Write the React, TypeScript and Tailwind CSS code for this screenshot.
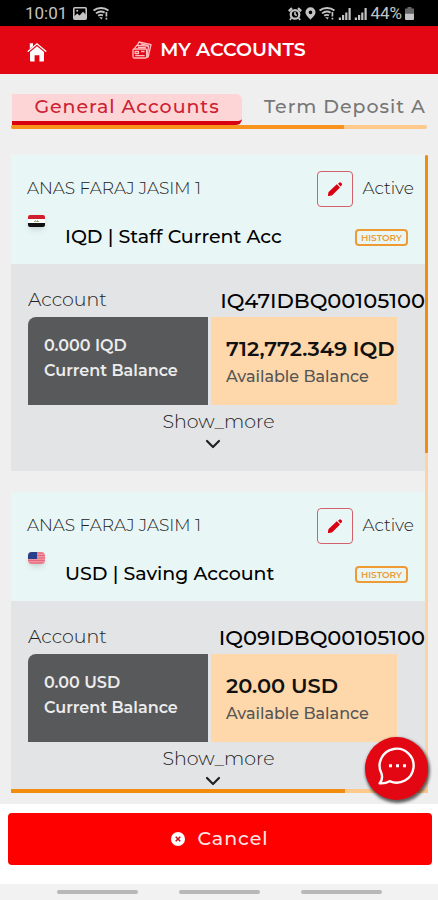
import { ChevronDown } from "lucide-react";
import { clsx } from "clsx";

type Currency = "IQD" | "USD";

type Account = {
  owner: string;
  currency: Currency;
  title: string;
  iban: string;
  current: string;
  available: string;
};

const accounts: Account[] = [
  {
    owner: "ANAS FARAJ JASIM 1",
    currency: "IQD",
    title: "IQD | Staff Current Acc",
    iban: "IQ47IDBQ00105100",
    current: "0.000 IQD",
    available: "712,772.349 IQD",
  },
  {
    owner: "ANAS FARAJ JASIM 1",
    currency: "USD",
    title: "USD | Saving Account",
    iban: "IQ09IDBQ00105100",
    current: "0.00 USD",
    available: "20.00 USD",
  },
];

function PictureIcon() {
  return (
    <svg viewBox="0 0 14 13" className="h-[13px] w-[14px]" aria-hidden="true">
      <rect x="0.8" y="0.8" width="12.4" height="11.4" rx="1" fill="none" stroke="currentColor" strokeWidth="1.6" />
      <path d="M1 12V9.500l3.200-3 2.400 2L10 4.800l3 3V12Z" fill="currentColor" />
      <circle cx="4.2" cy="3.8" r="1" fill="currentColor" />
    </svg>
  );
}

function WifiIcon() {
  return (
    <svg viewBox="0 0 16 13" className="h-[13px] w-4" fill="none" stroke="currentColor" aria-hidden="true">
      <path d="M.6 3.600C4.600.2 11.400.2 15.400 3.600" strokeWidth="2" />
      <path d="M3 6.400c2.600-2 6.200-2.200 8.600-.8M5.200 8.800c1.400-1.200 3.200-1.200 4.800-.4" strokeWidth="1.800" />
      <path d="m6.200 10 2.200 2.400 1.400-2Z" fill="currentColor" stroke="none" />
      <path d="M13.400 5v4.500M13.400 10.800v1.700" strokeWidth="1.700" />
    </svg>
  );
}

function AlarmIcon() {
  return (
    <svg viewBox="0 0 14 14" className="h-[14px] w-[14px]" fill="none" stroke="currentColor" aria-hidden="true">
      <circle cx="7" cy="7.4" r="4.3" strokeWidth="2.2" />
      <path d="M7 5v2.600l1.800.9M3.400 11l-1.600 2M10.600 11l1.600 2" strokeWidth="1.600" />
      <path d="M.8 4.200 4 1.200M13.200 4.200 10 1.200" strokeWidth="2.400" />
    </svg>
  );
}

function PinIcon() {
  return (
    <svg viewBox="0 0 12 14" className="h-[13px] w-[11px]" aria-hidden="true">
      <path
        fillRule="evenodd"
        d="M6 .3a5.500 5.500 0 0 1 5.500 5.400C11.500 9 6 13.700 6 13.700S.5 9 .5 5.700A5.500 5.500 0 0 1 6 .3Zm0 3.400a2 2 0 1 0 0 4 2 2 0 0 0 0-4Z"
        fill="currentColor"
      />
    </svg>
  );
}

function SignalIcon() {
  return (
    <svg viewBox="0 0 13 12" className="h-3 w-[13px]" fill="currentColor" aria-hidden="true">
      <path d="M.8 9.500H3V12H.8ZM4 7h2.200v5H4ZM7.200 4.500h2.200V12H7.200ZM10.500 0h2.200v12h-2.200Z" />
    </svg>
  );
}

function BatteryIcon() {
  return (
    <svg viewBox="0 0 9 13" className="h-[13px] w-[9px]" aria-hidden="true">
      <path d="M2.500 0h4v1.500H9v5H0v-5h2.500Z" fill="#666" />
      <path d="M0 6.500h9V12a1 1 0 0 1-1 1H1a1 1 0 0 1-1-1Z" fill="currentColor" />
    </svg>
  );
}

function StatusBar() {
  return (
    <div className="flex h-[26px] shrink-0 items-center justify-between bg-black pt-px pr-6 pl-[25px] font-['Roboto',sans-serif] text-[17px] text-[#c4c4c4]">
      <div className="flex items-center gap-[6px]">
        <span className="leading-none">10:01</span>
        <PictureIcon />
        <WifiIcon />
      </div>
      <div className="flex items-center gap-[3px]">
        <AlarmIcon />
        <PinIcon />
        <WifiIcon />
        <SignalIcon />
        <SignalIcon />
        <span className="leading-none">44%</span>
        <BatteryIcon />
      </div>
    </div>
  );
}

function HomeIcon() {
  return (
    <svg viewBox="0 0 20 20" className="h-5 w-5" aria-hidden="true">
      <path
        d="M3 10 10 4.200l7 5.800V18.400a1 1 0 0 1-1 1h-3.600v-6.200H7.600v6.200H4a1 1 0 0 1-1-1Z"
        fill="currentColor"
      />
      <path d="M2.800 1.200h3.200v3L2.800 7Z" fill="currentColor" />
      <path d="m1.200 9.200 8.800-7.400 8.800 7.400" fill="none" stroke="currentColor" strokeWidth="1.400" strokeLinecap="round" />
    </svg>
  );
}

function CashIcon() {
  return (
    <svg
      viewBox="0 0 20 18"
      className="h-[18px] w-5 text-[#ffc0c3]"
      fill="none"
      stroke="currentColor"
      strokeWidth="1.300"
      strokeLinejoin="round"
      aria-hidden="true"
    >
      <rect x="1" y="8" width="13.600" height="9" rx="1.200" />
      <path d="M2.200 7.800 4.800 4.400l11.800.8-1.800 11.400" />
      <path d="M5.400 4.200 7 1l12 2.600-2.800 12.200-1.400.6" />
      <path d="m8.600 2.800 7.800 1.800M6 6.300l7.800.4" />
      <path d="M3.200 10.300h3.300v2.200H3.200ZM9 10.500h3.600M3.200 14.700h9.400" />
    </svg>
  );
}

function PencilIcon() {
  return (
    <svg viewBox="0 0 16 16" className="h-4 w-4" fill="#d90012" aria-hidden="true">
      <path
        d="M1.700 14.300 2.200 11.600 9.800 4.200l2.200 2.300-7.600 7.300Z"
        stroke="#d90012"
        strokeWidth="1.600"
        strokeLinejoin="round"
      />
      <path d="m11 2.800 1.100-1a1.600 1.600 0 0 1 2.200.1l.3.300a1.600 1.600 0 0 1 0 2.200l-1.100 1.100Z" />
    </svg>
  );
}

function ChatIcon() {
  return (
    <svg viewBox="0 0 40 40" className="h-10 w-10" fill="none" stroke="currentColor" aria-hidden="true">
      <path
        d="M4.500 26.500A17 17 0 1 1 12.600 34.200C9.700 36 6 36.600 2.600 36.300 4.800 34 5.500 30 4.500 26.500Z"
        strokeWidth="2.400"
        strokeLinejoin="round"
      />
      <path d="M12 17.200h3v3h-3ZM19 17.200h3v3h-3ZM26 17.200h3v3h-3Z" fill="currentColor" stroke="none" />
    </svg>
  );
}

function Flag({ currency }: { currency: Currency }) {
  if (currency === "IQD") {
    return (
      <svg viewBox="0 0 17 12" className="h-3 w-[17px] rounded-xs shadow-md" role="img" aria-label="Iraq">
        <path d="M0 0h17v4H0Z" fill="#cf2030" />
        <path d="M0 4h17v4H0Z" fill="#fff" />
        <path d="M0 8h17v4H0Z" fill="#111" />
        <path d="M6 6.500h1.500V5.300M8.200 6.500h3M9.500 5.200v1.300" stroke="#9aa765" fill="none" />
      </svg>
    );
  }

  return (
    <svg viewBox="0 0 17 12" className="h-3 w-[17px] rounded-sm shadow-md" role="img" aria-label="United States">
      <path d="M0 0h17v12H0Z" fill="#f2929f" />
      <path d="M0 1h17M0 3.500h17M0 6h17M0 8.500h17M0 11h17" stroke="#e2677c" />
      <path d="M0 0h9v7H0Z" fill="#27408b" />
    </svg>
  );
}

function AccountCard({ account }: { account: Account }) {
  return (
    <article className="shrink-0">
      <div className="h-[109px] bg-[#e9f6f6] pt-4 pr-[11px] pl-4">
        <div className="flex items-center">
          <p className="flex-1 text-[17px] font-light text-[#222]">{account.owner}</p>
          <button
            type="button"
            aria-label="Edit account"
            className="flex h-9 w-9 items-center justify-center rounded-sm border border-[#d4606c]"
          >
            <PencilIcon />
          </button>
          <span className="w-[61px] text-right text-[17px] font-light text-[#222]">Active</span>
        </div>
        <div className="flex items-start pt-2 pl-px">
          <Flag currency={account.currency} />
          <h2 className="ml-5 flex-1 pt-2 text-[19px] leading-7 font-medium text-black">{account.title}</h2>
          <button
            type="button"
            className="mt-[14px] mr-[6px] h-[17px] w-[53px] rounded-sm border-2 border-[#ee9a35] text-[9px] leading-none font-semibold text-[#ee9a35]"
          >
            HISTORY
          </button>
        </div>
      </div>

      <div className="h-[207px] bg-[#e2e4e6] pt-5 pl-[17px]">
        <div className="flex h-[33px] items-center justify-between overflow-hidden whitespace-nowrap">
          <span className="text-[19px] font-light text-[#222]">Account</span>
          <span className="text-[21px] font-medium text-black">{account.iban}</span>
        </div>
        <div className="mr-7 flex h-[88px] gap-[3px]">
          <div className="flex-1 rounded-tl-lg bg-[#58595b] px-4 pt-4 text-[16px] leading-[25px] font-semibold whitespace-nowrap text-[#ececec]">
            <p>{account.current}</p>
            <p>Current Balance</p>
          </div>
          <div className="w-[186px] bg-[#fed8ab] pt-4 pl-[15px] whitespace-nowrap">
            <p className="text-[21px] leading-8 font-semibold text-[#111]">{account.available}</p>
            <p className="text-[16px] leading-6 font-medium text-[#555]">Available Balance</p>
          </div>
        </div>
        <div className="pt-[3px] pr-4">
          <button type="button" className="mx-auto flex flex-col items-center text-[19px] leading-7 font-light text-[#222]">
            Show_more
            <ChevronDown className="-mt-1 mr-3 h-6 w-6 text-[#222]" strokeWidth={2.2} />
          </button>
        </div>
      </div>
    </article>
  );
}

export default function App() {
  return (
    <div className="relative flex h-screen flex-col bg-[#efefef] font-['Montserrat','Inter',sans-serif]">
      <StatusBar />

      <header className="grid h-12 shrink-0 grid-cols-[1fr_auto_1fr] items-center bg-[#e30613] px-[27px] text-white">
        <a href="#home" aria-label="Home" className="justify-self-start pt-1">
          <HomeIcon />
        </a>
        <h1 className="flex items-center gap-2 text-[19px] font-semibold">
          <CashIcon />
          MY ACCOUNTS
        </h1>
      </header>

      <main className="flex min-h-0 flex-1 flex-col pr-[10px] pb-[11px] pl-[11px]">
        <nav className="mt-5 shrink-0">
          <div className="flex overflow-hidden pl-px whitespace-nowrap">
            {["General Accounts", "Term Deposit A"].map((tab, i) => (
              <button
                key={tab}
                type="button"
                className={clsx(
                  "h-[31px] shrink-0 text-[19px] leading-none font-medium tracking-wider",
                  i === 0
                    ? "w-[230px] rounded-r-md border-b-4 border-[#d90012] bg-[#fdd5d6] pb-[2px] text-[#cc2233]"
                    : "pb-[6px] pl-[22px] text-[#777]",
                )}
              >
                {tab}
              </button>
            ))}
          </div>
          <div className="mr-px h-1 overflow-hidden rounded-full bg-[#fdc98d]">
            <div className="h-full w-4/5 bg-[#f8941d]" />
          </div>
        </nav>

        <section className="mt-[26px] flex min-h-0 flex-1 flex-col">
          <div className="flex min-h-0 flex-1">
            <div className="flex min-w-0 flex-1 flex-col gap-[21px] overflow-hidden">
              {accounts.map((account) => (
                <AccountCard key={account.iban} account={account} />
              ))}
            </div>
            <div className="w-[3px] shrink-0 bg-[#fdd3a3]">
              <div className="h-[47%] rounded-t-full bg-[#f28c0f]" />
            </div>
          </div>
          <div className="h-1 shrink-0 overflow-hidden bg-[#fdc98d]">
            <div className="h-full w-4/5 bg-[#f28c0f]" />
          </div>
        </section>
      </main>

      <footer className="shrink-0 bg-white">
        <div className="pt-[9px] pr-[6px] pb-[19px] pl-2">
          <button
            type="button"
            className="flex h-[52px] w-full items-center justify-center gap-3 rounded-sm bg-[#fe0000] text-[19px] font-medium tracking-wider text-[#ffe5e5]"
          >
            <svg viewBox="0 0 14 14" className="h-[14px] w-[14px]" aria-hidden="true">
              <circle cx="7" cy="7" r="7" fill="#fff" />
              <path d="m4.700 4.700 4.600 4.600M9.300 4.700 4.700 9.300" stroke="#c81420" strokeWidth="1.600" />
            </svg>
            Cancel
          </button>
        </div>
        <div className="flex h-4 items-center justify-center gap-[41px] bg-[#f2f2f2]">
          <span className="h-1 w-[81px] rounded-full bg-[#b8b8b8]" />
          <span className="h-1 w-[81px] rounded-full bg-[#b8b8b8]" />
          <span className="h-1 w-[81px] rounded-full bg-[#b8b8b8]" />
        </div>
      </footer>

      <button
        type="button"
        aria-label="Open chat"
        className="absolute right-[10px] bottom-[100px] flex h-[63px] w-[63px] items-center justify-center rounded-full bg-[#e30613] pb-1 text-white shadow-[1px_2px_3px_1px_rgba(0,0,0,0.6)]"
      >
        <ChatIcon />
      </button>
    </div>
  );
}
